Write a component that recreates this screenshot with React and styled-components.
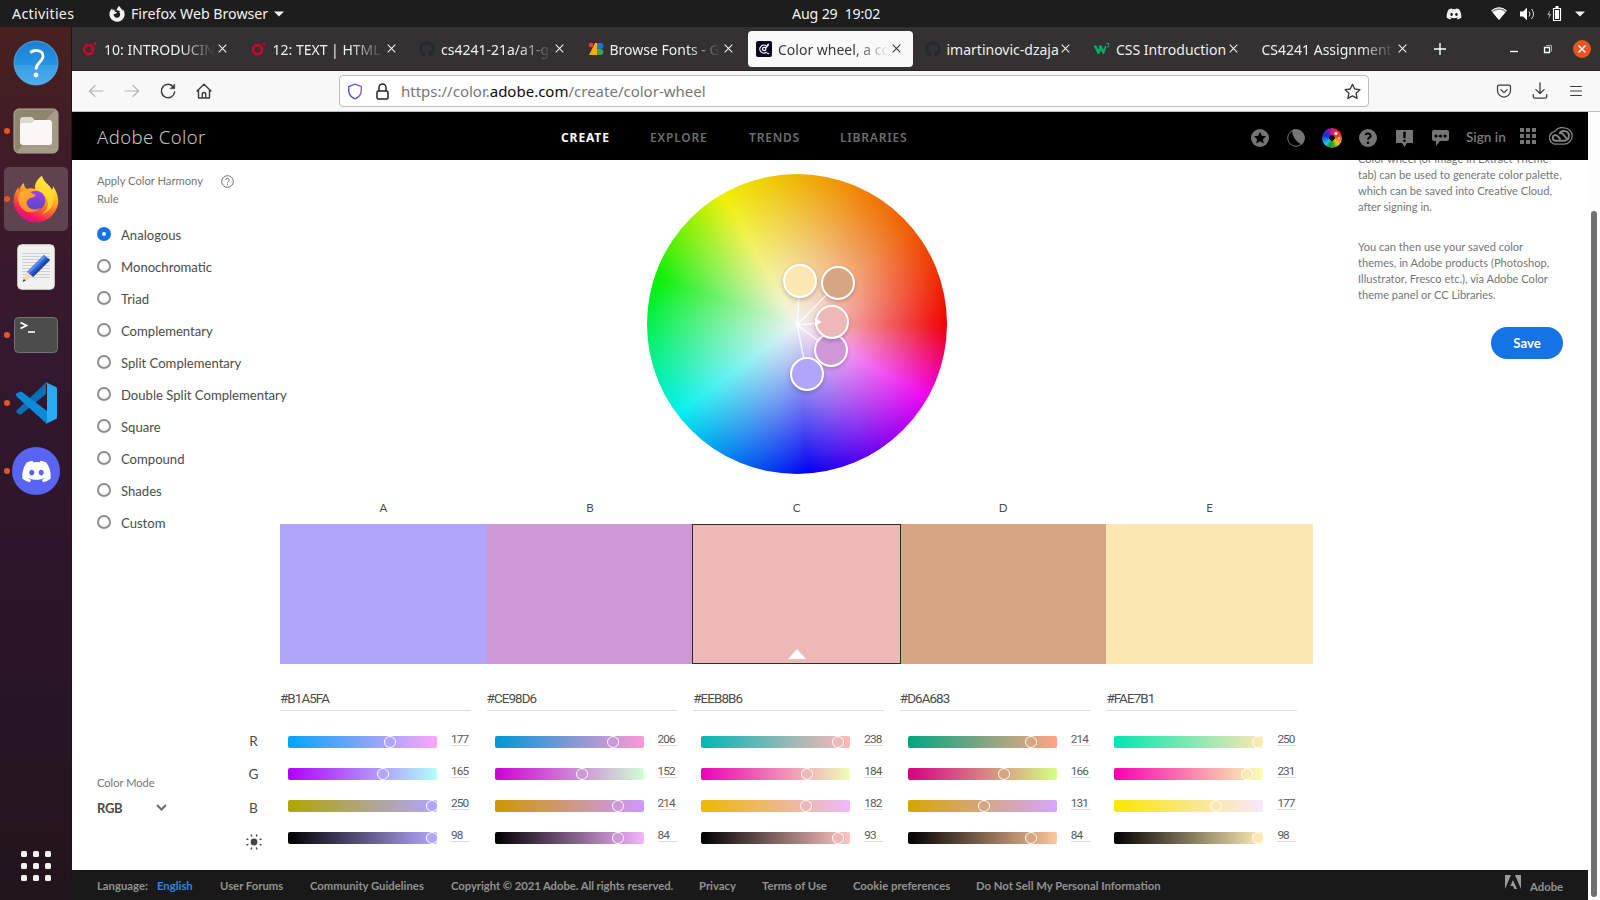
import React from 'react';
import styled, { createGlobalStyle, css } from 'styled-components';
import { FaDiscord, FaGithub, FaFirefoxBrowser } from 'react-icons/fa';

const ui = "'Noto Sans', 'Open Sans', sans-serif";
const page = "Lato, 'Noto Sans', sans-serif";
const digits = "Roboto, 'Noto Sans', sans-serif";

const GlobalStyle = createGlobalStyle`
  *, *::before, *::after { box-sizing: border-box; }
  body { margin: 0; overflow: hidden; }
  svg { display: block; flex: none; }
`;

/* ---------- desktop ---------- */
const Desktop = styled.div`
  display: flex;
  flex-direction: column;
  width: 1600px;
  height: 900px;
  overflow: hidden;
  background: #fff;
  font-family: ${ui};
`;

const TopBar = styled.header`
  display: grid;
  grid-template-columns: 780px 1fr auto;
  align-items: center;
  flex: none;
  height: 27px;
  padding: 0 15px 0 12px;
  background: #1d1d1d;
  color: #f2f2f2;
  font-size: 14.2px;
  line-height: 27px;
  white-space: pre;
`;
const TopLeft = styled.div`
  display: flex;
  align-items: center;
`;
const Activities = styled.span`
  width: 97px;
  letter-spacing: 0.32px;
`;
const AppName = styled.span`
  margin: 0 6px 0 6px;
`;
const Clock = styled.span`
  letter-spacing: -0.15px;
  line-height: 25px;
`;
const Tray = styled.div`
  display: flex;
  align-items: center;
  justify-content: flex-end;
`;
const TraySlot = styled.span`
  display: flex;
  justify-content: center;
  width: ${(p) => p.$w}px;
`;

const Workspace = styled.div`
  display: flex;
  flex: 1;
  min-height: 0;
`;

const Dock = styled.nav`
  display: flex;
  flex-direction: column;
  flex: none;
  width: 72px;
  padding-top: 2px;
  border-right: 1px solid #24101d;
  background: linear-gradient(#48211f 0%, #3d1a29 18%, #33182e 38%, #2c152a 60%, #24151f 92%, #22141c 100%);
`;
const DockItem = styled.div`
  position: relative;
  display: flex;
  align-items: center;
  justify-content: center;
  height: 64px;
  margin: 2px 3px 2px 4px;
  border-radius: 5px;
  background: ${(p) => (p.$active ? 'rgba(255,255,255,0.18)' : 'transparent')};
  ${(p) =>
    p.$running &&
    css`
      &::before {
        content: '';
        position: absolute;
        left: 0;
        top: 29px;
        width: 6px;
        height: 6px;
        border-radius: 50%;
        background: #e95420;
      }
    `}
`;
const AppsGrid = styled.div`
  display: grid;
  grid-template-columns: repeat(3, 6px);
  gap: 6px;
  justify-content: center;
  margin-top: auto;
  padding-bottom: 19px;
`;
const AppsDot = styled.i`
  height: 6px;
  border-radius: 1.5px;
  background: #f0f0ec;
`;

/* ---------- browser chrome ---------- */
const Browser = styled.div`
  display: flex;
  flex-direction: column;
  flex: 1;
  min-width: 0;
`;
const TabStrip = styled.div`
  display: flex;
  align-items: center;
  flex: none;
  height: 44px;
  padding-left: 2px;
  background: #333132;
  border-bottom: 1px solid #252324;
`;
const Tab = styled.div`
  display: flex;
  align-items: center;
  flex: none;
  width: 165px;
  height: 36px;
  margin-right: 3.5px;
  padding: 0 12px 0 8px;
  border-radius: 4px;
  background: ${(p) => (p.$active ? '#f9f9f9' : 'transparent')};
  color: ${(p) => (p.$active ? '#3a3839' : '#f0f0ee')};
`;
const TabTitle = styled.span`
  flex: 1;
  overflow: hidden;
  margin-left: ${(p) => (p.$bare ? 0 : 6)}px;
  margin-right: ${(p) => (p.$fade ? 3 : 0)}px;
  font-size: 14px;
  line-height: 34px;
  padding-top: 2px;
  white-space: nowrap;
  ${(p) => p.$fade && css`mask-image: linear-gradient(90deg, #000 calc(100% - 34px), transparent 100%);`}
`;
const NewTab = styled.div`
  display: flex;
  margin-left: 12px;
`;
const WindowControls = styled.div`
  display: flex;
  align-items: center;
  gap: 17px;
  margin-left: auto;
  padding-right: 9px;
`;

const Toolbar = styled.div`
  display: flex;
  align-items: center;
  flex: none;
  height: 41px;
  background: #f8f8f8;
  border-bottom: 1px solid #bdbdbd;
  color: #3c3b3c;
`;
const NavButtons = styled.div`
  display: flex;
  gap: 16px;
  width: 267px;
  padding-left: 14px;
`;
const UrlBar = styled.div`
  display: flex;
  align-items: center;
  width: 1030px;
  height: 32px;
  padding: 0 7px;
  border: 1px solid #bcbcbc;
  border-radius: 4px;
  background: #fff;
`;
const UrlText = styled.span`
  flex: 1;
  color: #76767a;
  font-size: 15px;
  b { color: #0c0c0d; font-weight: 400; }
`;
const ToolbarEnd = styled.div`
  display: flex;
  gap: 18px;
  margin-left: auto;
  padding-right: 15px;
`;

/* ---------- Adobe Color page ---------- */
const Viewport = styled.div`
  display: flex;
  flex: 1;
  min-height: 0;
`;
const Site = styled.div`
  display: flex;
  flex-direction: column;
  width: 1516px;
  font-family: ${page};
  color: #4b4b4b;
`;
const Scrollbar = styled.div`
  flex: 1;
  padding: 99px 3px 3px;
  background: #fdfdfd;
`;
const ScrollThumb = styled.div`
  width: 6px;
  height: 100%;
  border-radius: 3px;
  background: #717171;
`;

const SiteHeader = styled.div`
  display: flex;
  align-items: center;
  flex: none;
  height: 48px;
  padding-left: 25px;
  background: #000;
`;
const Brand = styled.span`
  width: 464px;
  padding-top: 1px;
  color: #c4c4c4;
  font-family: ${ui};
  font-size: 18.5px;
  font-weight: 300;
  letter-spacing: 0.4px;
`;
const NavLink = styled.span`
  width: ${(p) => p.$w}px;
  padding-top: 2px;
  color: ${(p) => (p.$active ? '#fff' : '#6d6d6d')};
  font-family: ${ui};
  font-size: 12px;
  font-weight: ${(p) => (p.$active ? 700 : 600)};
  letter-spacing: ${(p) => (p.$active ? 0.9 : 0.8)}px;
`;
const HeaderTools = styled.div`
  display: flex;
  align-items: center;
  margin-left: auto;
  padding-right: 15px;
`;
const Tool = styled.span`
  display: flex;
  justify-content: center;
  width: 36px;
  padding-top: 3px;
`;
const SignIn = styled.span`
  width: 62px;
  padding: 1px 0 0 8px;
  color: #7b7b7b;
  font-size: 13.6px;
  font-weight: 600;
  white-space: nowrap;
`;
const Waffle = styled.div`
  display: grid;
  grid-template-columns: repeat(3, 4px);
  gap: 2px;
  margin-right: 13px;
  i { height: 4px; background: #757575; }
`;

const Main = styled.main`
  display: grid;
  grid-template-columns: 208px 1033px 1fr;
  flex: none;
  height: 710px;
  overflow: hidden;
`;

const Side = styled.aside`
  display: flex;
  flex-direction: column;
  padding: 12px 0 0 25px;
`;
const RuleHead = styled.div`
  display: flex;
  gap: 15px;
  height: 46px;
  color: #757575;
  font-size: 11.2px;
  line-height: 18px;
  svg { margin-top: 3px; }
`;
const RuleTitle = styled.span`
  width: 109px;
`;
const Option = styled.label`
  display: flex;
  align-items: center;
  gap: 10px;
  height: 32px;
  color: #4b4b4b;
  font-size: 13.1px;
  white-space: nowrap;
`;
const OptionText = styled.span`
  padding-top: 2px;
`;
const Radio = styled.i`
  flex: none;
  width: 14px;
  height: 14px;
  border: ${(p) => (p.$on ? '5px solid #1473e6' : '2px solid #8e8e8e')};
  border-radius: 50%;
  background: #fdfdfd;
`;
const SideFoot = styled.div`
  display: flex;
  margin-top: auto;
  height: 145px;
`;
const Mode = styled.div`
  flex: none;
  width: 148px;
  padding-top: 49px;
`;
const ModeLabel = styled.div`
  height: 25px;
  color: #757575;
  font-size: 11.1px;
  line-height: 18px;
`;
const ModeValue = styled.div`
  display: flex;
  align-items: center;
  gap: 34px;
  height: 18px;
  font-size: 13px;
  font-weight: 700;
  letter-spacing: -0.3px;
  svg { margin-bottom: 2px; }
`;
const Channels = styled.div`
  display: flex;
  flex-direction: column;
  width: 17px;
  font-size: 13.6px;
  line-height: 33.4px;
  align-items: center;
`;

const Center = styled.section`
  display: flex;
  flex-direction: column;
  align-items: center;
  padding-top: 14px;
`;
const Wheel = styled.div`
  position: relative;
  flex: none;
  width: 300px;
  height: 300px;
  border-radius: 50%;
  background:
    radial-gradient(closest-side, rgb(243, 243, 243), rgba(241, 241, 241, 0)),
    conic-gradient(#f0b400 0deg, #f07800 30deg, #f05a00 50deg, #f00000 90deg, #f000f0 119deg, #0000f0 176deg, #00f0f0 233deg, #00f000 288deg, #f0f000 330deg, #f0b400 360deg);
`;
const Spokes = styled.svg`
  position: absolute;
  inset: 0;
`;
const Marker = styled.i`
  position: absolute;
  left: ${(p) => p.$x - 17}px;
  top: ${(p) => p.$y - 17}px;
  width: 34px;
  height: 34px;
  border: 2px solid #fff;
  border-radius: 50%;
  background: ${(p) => p.$c};
  box-shadow: 0 2px 4px rgba(0, 0, 0, 0.22);
`;
const MarkerArrow = styled.i`
  position: absolute;
  left: 168px;
  top: 144px;
  border: solid transparent;
  border-width: 4.5px 0 4.5px 7px;
  border-left-color: #fff;
`;

const Columns = styled.div`
  display: grid;
  grid-template-columns: repeat(5, 1fr);
  width: 1033px;
`;
const ColumnName = styled.div`
  padding-top: 25px;
  height: 50px;
  font-size: 11.5px;
  line-height: 18px;
  text-align: center;
`;
const Swatch = styled.div`
  display: flex;
  align-items: flex-end;
  justify-content: center;
  height: 140px;
  background: ${(p) => p.$c};
  ${(p) =>
    p.$selected &&
    css`
      z-index: 1;
      margin: 0 -1px;
      border: 1px solid #2c2c2c;
      &::after {
        content: '';
        margin: 0 0 4px 1px;
        border: solid transparent;
        border-width: 0 9px 10px;
        border-bottom-color: #fff;
      }
    `}
`;
const Controls = styled.div`
  padding: 24px 16px 0 0;
`;
const Hex = styled.div`
  height: 23px;
  margin-bottom: 25px;
  border-bottom: 1px solid #dcdcdc;
  font-family: ${digits};
  font-size: 13.4px;
  line-height: 22px;
  letter-spacing: -0.9px;
`;
const SliderRow = styled.div`
  display: flex;
  height: 32px;
  padding-left: 8px;
`;
const Track = styled.div`
  position: relative;
  width: 149px;
  height: 12px;
  border-radius: 2px;
`;
const Thumb = styled.i`
  position: absolute;
  top: 0;
  width: 12px;
  height: 12px;
  border: 1px solid #fff;
  border-radius: 50%;
`;
const Value = styled.span`
  width: 19px;
  height: 17px;
  margin: -7px 0 0 14px;
  border-bottom: 1px solid #d8d8d8;
  color: #5a5a5a;
  font-family: ${digits};
  font-size: 11.8px;
  line-height: 20px;
  letter-spacing: -0.9px;
`;

const Info = styled.aside`
  display: flex;
  flex-direction: column;
  padding: 0 25px 0 45px;
  margin-top: -9px;
  color: #757575;
  font-size: 11.1px;
  line-height: 16px;
  white-space: pre;
`;
const Para = styled.p`
  margin: 0 0 24px;
`;
const SaveButton = styled.button`
  align-self: flex-end;
  width: 72px;
  height: 32px;
  padding: 0 0 1px;
  border: 0;
  border-radius: 16px;
  background: #1473e6;
  color: #fff;
  font: 700 13.2px ${page};
`;

const Footer = styled.footer`
  display: flex;
  align-items: center;
  flex: none;
  height: 30px;
  padding: 0 25px 0;
  background: #191919;
  color: #929292;
  font-size: 11.3px;
  font-weight: 700;
  white-space: nowrap;
`;
const FootItem = styled.span`
  width: ${(p) => p.$w}px;
  padding-top: 1px;
  color: ${(p) => (p.$link ? '#2f86ee' : 'inherit')};
  letter-spacing: ${(p) => p.$ls || 0}px;
`;
const AdobeMark = styled.span`
  display: flex;
  gap: 9px;
  margin-left: auto;
`;
const AdobeText = styled.span`
  width: 33px;
  padding-top: 4px;
  line-height: 16px;
`;

/* ---------- icons ---------- */
const Close = () => (
  <svg width="9" height="9" viewBox="0 0 9 9" stroke="currentColor" strokeWidth="1.1"><path d="M.7.7l7.6 7.6M8.3.7L.7 8.3" /></svg>
);
const Caret = () => <svg width="10" height="6" fill="#f2f2f2"><path d="M0 .5h10L5 5.5z" /></svg>;
const RedO = () => (
  <svg width="16" height="16" viewBox="0 0 16 16"><circle cx="6.6" cy="8.6" r="4.5" fill="none" stroke="#d3002d" strokeWidth="2.6" /><circle cx="13.1" cy="3" r="1.4" fill="#d3002d" /></svg>
);
const GFonts = () => (
  <svg width="16" height="16" viewBox="0 0 16 16"><path d="M7 2h3v12H1z" fill="#fbad05" /><circle cx="3" cy="4" r="2.2" fill="#ea4335" /><path d="M9 2h3.4a3 3 0 010 6H9z" fill="#1a73e8" /><path d="M9 8h3.4a3 3 0 010 6H9z" fill="#34a853" /></svg>
);
const ColorFav = () => (
  <svg width="16" height="16" viewBox="0 0 16 16"><rect width="16" height="16" rx="2" fill="#0b0620" /><g fill="none" stroke="#fff" strokeWidth="1.2"><path d="M10.6 5.200A4 4 0 1010.600 11M11 4l2-1M11 12l2 1" /><circle cx="8.200" cy="8" r="1.700" /><path d="M9.500 7l3-3" /></g></svg>
);
const W3 = () => (
  <svg width="17" height="16" viewBox="0 0 17 16"><path d="M.5 4.500h3l1.800 4 1-2.200-.8-1.800h3l2 4 1.700-4 1.300 1-2.400 7.500H9.800L8 9.500l-1.800 3.500H4.600z" fill="#0aa86a" /><path d="M13.500 2.500h2.600l-1.200 1.500c1.800.3 1.300 2.500-.9 2.200" fill="none" stroke="#0aa86a" strokeWidth="1" /></svg>
);
const Stroke = ({ w = 20, sw = 1.4, children, c = 'currentColor' }) => (
  <svg width={w} height={w} viewBox="0 0 20 20" fill="none" stroke={c} strokeWidth={sw} strokeLinecap="round" strokeLinejoin="round">{children}</svg>
);

const HelpApp = () => (
  <svg width="46" height="46" viewBox="0 0 46 46">
    <defs><linearGradient id="hg" x2="0" y2="1"><stop offset="0" stopColor="#1c7fd3" /><stop offset=".54" stopColor="#2792e2" /><stop offset=".55" stopColor="#369ce5" /><stop offset="1" stopColor="#4fb1ec" /></linearGradient></defs>
    <circle cx="23" cy="23" r="22" fill="url(#hg)" stroke="#59b4ee" strokeWidth=".8" />
    <path d="M17.500 12.800c2.500-3.300 12.500-3.600 12.500 3.400 0 5.500-7 6.300-7 13.300" fill="none" stroke="#fff" strokeWidth="2.800" /><circle cx="23" cy="35" r="2.400" fill="#fff" />
  </svg>
);
const FilesApp = () => (
  <svg width="46" height="46" viewBox="0 0 46 46">
    <rect x="1" y="1" width="44" height="44" rx="5" fill="#8f8670" stroke="#b5ae9c" /><path d="M44.500 6v34a5 5 0 01-5 4.500H3L42 2q2.500 1 2.500 4z" fill="#a49c86" />
    <path d="M7 12a3 3 0 013-3h9l3.500 4H36v8H7z" fill="#ddd9cd" /><path d="M7 17q0-2 2-2h10l3-3h14a3 3 0 013 3v19a3 3 0 01-3 3H10a3 3 0 01-3-3z" fill="#f9f8f7" />
  </svg>
);
const FirefoxApp = () => (
  <svg width="46" height="48" viewBox="0 0 46 48">
    <defs>
      <linearGradient id="ff1" x1=".8" x2=".3" y2="1"><stop offset=".1" stopColor="#fff04a" /><stop offset=".4" stopColor="#ffae22" /><stop offset=".66" stopColor="#ff5a33" /><stop offset=".85" stopColor="#f3195f" /><stop offset="1" stopColor="#d4108a" /></linearGradient>
      <linearGradient id="ff2" x2="0" y2="1"><stop offset="0" stopColor="#a43cf2" /><stop offset="1" stopColor="#4f4bbf" /></linearGradient>
      <linearGradient id="ff3" x2="1" y2="1"><stop offset="0" stopColor="#ffb82e" /><stop offset="1" stopColor="#ff7a2c" /></linearGradient>
    </defs>
    <path d="M29 1c1 6 8 9 10 14 1-1 1-3 1-4 4 6 6 12 5 18a22.500 22.500 0 01-44.500-2C.5 20 3 15 5.500 12l.5 4c1-4 3-7 5-8 0 3 1 5 3 6 2-1 5-1 8 0-1-5 3-11 7-13z" fill="url(#ff1)" />
    <path d="M29 1c1 6 8 9 10 14 5 11-1 22-10 24 6-4 8-11 3-18-3-4-6-4-9-7-1-5 2-11 6-13z" fill="#ffe030" opacity=".75" />
    <circle cx="22.500" cy="25.500" r="9.800" fill="url(#ff2)" />
    <path d="M7 18c3-3 7-3 10-1 2 1 4 3 6 2.500-1 2.500-3 3-5.500 3.500-2 .6-3.500 2.500-4 5 1 6 8 8 14 5-5 6-16 6-20-2-3-5-2.500-10-.5-13z" fill="url(#ff3)" />
  </svg>
);
const TextApp = () => (
  <svg width="38" height="46" viewBox="0 0 38 46">
    <rect x=".7" y=".7" width="36.600" height="44.600" rx="4" fill="#f1f1f1" stroke="#d9d9d9" />
    <path d="M5 9.500h28M5 12.500h28M5 15.500h28M5 18.500h28M5 21.500h28M5 24.500h28M5 27.500h28M5 30.500h28M5 33.500h28" stroke="#cfcfcf" strokeWidth="1" />
    <path d="M27 11l6 5-17 17-6-5z" fill="#2a62d6" /><path d="M27 11l2 1.700-17 17-2-1.700z" fill="#5a8cf0" /><path d="M31 14.300l2 1.700-17 17-2-1.700z" fill="#1b45a8" /><path d="M10 28l6 5-10.500 5z" fill="#fbd9b8" /><path d="M6.800 35l2 1.600-3.300 1.400z" fill="#333" />
  </svg>
);
const TerminalApp = () => (
  <svg width="44" height="36" viewBox="0 0 44 36">
    <rect x=".5" y=".5" width="43" height="35" rx="4" fill="#4c4c4c" stroke="#747474" /><path d="M6.500 5.500l6 3-6 3" fill="none" stroke="#fff" strokeWidth="1.700" /><path d="M14 15h7" stroke="#fff" strokeWidth="1.600" />
  </svg>
);
const CodeApp = () => (
  <svg width="42" height="42" viewBox="0 0 42 42">
    <path d="M1.500 28.500L31 .5v11.500L6 32.500q-1.500.5-4.500-2z" fill="#0a6fb3" />
    <path d="M1.500 13.500q-1.700-1 0-2L5 9.700q1-.4 2 .3L32 29v13L1.500 14.500z" fill="#0a8ad8" />
    <path d="M31 .3L41 5q1 .5 1 1.500v29q0 1-1 1.500l-10 4.800q1-1 1-2V2.500z" fill="#2aaaf2" />
  </svg>
);
const DiscordRound = styled.div`
  display: grid;
  place-items: center;
  width: 48px;
  height: 48px;
  border-radius: 50%;
  background: #5865f2;
  color: #fff;
  flex: none;
`;
const MiniWheel = styled.i`
  width: 20px;
  height: 20px;
  border-radius: 50%;
  background:
    radial-gradient(circle at 14px 5.5px, #fff 1.2px, transparent 1.9px),
    radial-gradient(circle at 17px 10px, #fff8 0.8px, transparent 1.5px),
    radial-gradient(circle at 10px 10px, #111 2.5px, transparent 3px),
    conic-gradient(#d21c8c, #f0282a 30deg, #f03a28 75deg, #f5a01c 110deg, #d9c718 140deg, #2ba82a 170deg, #1c9a38 200deg, #22c8e6 225deg, #1a84f0 255deg, #1a2ad0 290deg, #6a1cc8 330deg, #d21c8c);
`;

/* ---------- data ---------- */
const tabs = [
  { icon: <RedO />, title: '10: INTRODUCING', fade: true },
  { icon: <RedO />, title: '12: TEXT | HTML &', fade: true },
  { icon: <FaGithub size={16} color="#24292e" />, title: 'cs4241-21a/a1-ge', fade: true },
  { icon: <GFonts />, title: 'Browse Fonts - G', fade: true },
  { icon: <ColorFav />, title: 'Color wheel, a co', fade: true, active: true },
  { icon: <FaGithub size={16} color="#24292e" />, title: 'imartinovic-dzaja' },
  { icon: <W3 />, title: 'CSS Introduction' },
  { title: 'CS4241 Assignment', fade: true },
];
const rules = ['Analogous', 'Monochromatic', 'Triad', 'Complementary', 'Split Complementary', 'Double Split Complementary', 'Square', 'Compound', 'Shades', 'Custom'];
const palette = [
  { name: 'A', hex: '#B1A5FA', rgb: [177, 165, 250], v: 98 },
  { name: 'B', hex: '#CE98D6', rgb: [206, 152, 214], v: 84 },
  { name: 'C', hex: '#EEB8B6', rgb: [238, 184, 182], v: 93, selected: true },
  { name: 'D', hex: '#D6A683', rgb: [214, 166, 131], v: 84 },
  { name: 'E', hex: '#FAE7B1', rgb: [250, 231, 177], v: 98 },
];
const markers = [
  { x: 153, y: 107, c: '#FAE7B1' },
  { x: 191, y: 109, c: '#D6A683' },
  { x: 184, y: 176, c: '#CE98D6' },
  { x: 185, y: 148, c: '#EEB8B6' },
  { x: 160, y: 200, c: '#B1A5FA' },
];

const rgbText = (c) => `rgb(${c.join(',')})`;
function channelSlider(color, i) {
  if (i === 3) {
    const top = Math.max(...color.rgb);
    return { from: 'rgb(0,0,0)', to: rgbText(color.rgb.map((n) => Math.round((n * 255) / top))), at: color.v / 100, value: color.v };
  }
  const mix = (n) => rgbText(color.rgb.map((c, k) => (k === i ? n : c)));
  return { from: mix(0), to: mix(255), at: color.rgb[i] / 255, value: color.rgb[i] };
}

const Slider = ({ from, to, at, value, color }) => (
  <SliderRow>
    <Track style={{ background: `linear-gradient(90deg, ${from}, ${to})` }}>
      <Thumb style={{ left: at * 145.6 - 5, background: color }} />
    </Track>
    <Value>{value}</Value>
  </SliderRow>
);

export default function App() {
  return (
    <Desktop>
      <GlobalStyle />
      <TopBar>
        <TopLeft>
          <Activities>Activities</Activities>
          <FaFirefoxBrowser size={16} />
          <AppName>Firefox Web Browser</AppName>
          <Caret />
        </TopLeft>
        <Clock>{'Aug 29  19:02'}</Clock>
        <Tray>
          <TraySlot $w={46}><FaDiscord size={16} /></TraySlot>
          <TraySlot $w={44}>
            <svg width="16" height="14" viewBox="0 0 16 14"><path d="M0 3.500Q8-3 16 3.500L8 13z" fill="#8c8c8c" /><path d="M1.500 5.200Q8 .8 14.500 5.200L8 13z" fill="#fff" /><path d="M.5 3.700Q8-2 15.500 3.700" fill="none" stroke="#fff" /></svg>
          </TraySlot>
          <TraySlot $w={13}>
            <svg width="15" height="14" viewBox="0 0 15 14"><path d="M0 4.500h3L7 .8v12.400L3 9.500H0z" fill="#fff" /><path d="M9 4.500q2 2.500 0 5M11.500 2q4 5 0 10" fill="none" stroke="#ddd" /></svg>
          </TraySlot>
          <TraySlot $w={41}>
            <svg width="15" height="16" viewBox="0 0 15 16"><path d="M3 4L0 9h2l-.5 4L4.500 8h-2z" fill="#999" /><path d="M6.500 2.500h7v12h-7z" fill="none" stroke="#fff" strokeWidth="1.200" /><path d="M8 4h4v9H8zM8.500 0h3v2h-3z" fill="#fff" /></svg>
          </TraySlot>
          <Caret />
        </Tray>
      </TopBar>

      <Workspace>
        <Dock>
          <DockItem><HelpApp /></DockItem>
          <DockItem $running><FilesApp /></DockItem>
          <DockItem $running $active><FirefoxApp /></DockItem>
          <DockItem><TextApp /></DockItem>
          <DockItem $running><TerminalApp /></DockItem>
          <DockItem $running><CodeApp /></DockItem>
          <DockItem $running><DiscordRound><FaDiscord size={31} /></DiscordRound></DockItem>
          <AppsGrid>{Array.from({ length: 9 }, (_, i) => <AppsDot key={i} />)}</AppsGrid>
        </Dock>

        <Browser>
          <TabStrip>
            {tabs.map((t) => (
              <Tab key={t.title} $active={t.active}>
                {t.icon}
                <TabTitle $fade={t.fade} $bare={!t.icon}>{t.title}</TabTitle>
                <Close />
              </Tab>
            ))}
            <NewTab>
              <svg width="12" height="12" stroke="#fff" strokeWidth="1.400"><path d="M6 0v12M0 6h12" /></svg>
            </NewTab>
            <WindowControls>
              <svg width="18" height="12" stroke="#fff" strokeWidth="1.300"><path d="M5 8.500h8" /></svg>
              <svg width="16" height="12" fill="none" stroke="#fff"><path d="M4.500 4.500h5v5h-5z" strokeWidth="1.300" /><path d="M6 2.500h5.500v6" stroke="#aaa" /></svg>
              <svg width="18" height="18" viewBox="0 0 18 18"><circle cx="9" cy="9" r="9" fill="#e95420" /><path d="M5.500 5.500l7 7M12.500 5.500l-7 7" stroke="#fff" strokeWidth="1.500" /></svg>
            </WindowControls>
          </TabStrip>

          <Toolbar>
            <NavButtons>
              <Stroke c="#b3b3b3" sw={1.2}><path d="M17 10H3.500M9 4.500L3.500 10 9 15.500" /></Stroke>
              <Stroke c="#b3b3b3" sw={1.2}><path d="M3 10h13.500M11 4.500l5.500 5.500-5.500 5.500" /></Stroke>
              <Stroke sw={1.5}><path d="M15.500 6A6.700 6.700 0 1016.700 11" /><path d="M16.700 3.300v4.400h-4.400z" fill="currentColor" strokeWidth=".6" /></Stroke>
              <Stroke sw={1.4}><path d="M3 10l7-6.700 7 6.700M4.500 9v8h11V9M8.300 17v-4.500q1.700-2 3.400 0V17" /></Stroke>
            </NavButtons>
            <UrlBar>
              <svg width="16" height="17" viewBox="0 0 16 17"><defs><linearGradient id="sh" x1="1" x2="0" y2="1"><stop offset="0" stopColor="#a35bf5" /><stop offset="1" stopColor="#1d55c8" /></linearGradient></defs><path d="M8 1.200l6.300 2.300v3.800c0 4-2.500 7-6.300 8.500-3.800-1.500-6.300-4.500-6.300-8.500V3.500z" fill="none" stroke="url(#sh)" strokeWidth="1.400" /></svg>
              <TraySlot $w={38}>
                <svg width="13" height="17" viewBox="0 0 13 17" fill="none" stroke="#222" strokeWidth="1.500"><rect x="1" y="8" width="11" height="8" rx="1.500" /><path d="M3 8V4.500a3.500 3.500 0 017 0V8" /></svg>
              </TraySlot>
              <UrlText><span>https://color.</span><b>adobe.com</b><span>/create/color-wheel</span></UrlText>
              <Stroke w={17} sw={1.6} c="#3a3a3a"><path d="M10 1.500l2.600 5.600 6.100.7-4.500 4.200 1.200 6.100-5.400-3-5.400 3 1.200-6.100L1.300 7.800l6.100-.7z" /></Stroke>
            </UrlBar>
            <ToolbarEnd>
              <Stroke w={18} sw={1.4}><path d="M4.300 3.500h11.400q1.500 0 1.500 1.500v4.500a7.200 7.200 0 01-14.400 0V5q0-1.500 1.500-1.500zM6.500 8.500l3.500 3.300 3.500-3.300" /></Stroke>
              <Stroke w={18} sw={1.4}><path d="M10 1v11.500M5.500 8.500l4.500 4.300 4.500-4.300M2.500 14v2q0 2 2 2h11q2 0 2-2v-2" /></Stroke>
              <Stroke w={18} sw={1.3}><path d="M4 5h12M4 10h12M4 15h12" /></Stroke>
            </ToolbarEnd>
          </Toolbar>

          <Viewport>
            <Site>
              <SiteHeader>
                <Brand>Adobe Color</Brand>
                <NavLink $w={89} $active>CREATE</NavLink>
                <NavLink $w={99}>EXPLORE</NavLink>
                <NavLink $w={91}>TRENDS</NavLink>
                <NavLink $w={80}>LIBRARIES</NavLink>
                <HeaderTools>
                  <Tool><svg width="18" height="18" viewBox="0 0 18 18"><circle cx="9" cy="9" r="9" fill="#757575" /><path d="M9 2.800l1.800 4 4.300.5-3.200 2.900.9 4.300L9 12.300l-3.800 2.200.9-4.300-3.200-2.900 4.300-.5z" fill="#000" /></svg></Tool>
                  <Tool><svg width="18" height="18" viewBox="0 0 18 18"><circle cx="9" cy="9" r="8.300" fill="none" stroke="#757575" strokeWidth="1" /><path d="M5 1Q5.500 11 14.800 15.800A9 9 0 005 1z" fill="#757575" /></svg></Tool>
                  <Tool><MiniWheel /></Tool>
                  <Tool><svg width="18" height="18" viewBox="0 0 18 18"><circle cx="9" cy="9" r="9" fill="#757575" /><path d="M6.200 5.800q2.800-2.300 5-.3 1.200 2-1.200 3.300-.9.600-.9 2" fill="none" stroke="#000" strokeWidth="2" /><circle cx="9" cy="13.800" r="1.300" fill="#000" /></svg></Tool>
                  <Tool><svg width="17" height="18" viewBox="0 0 17 18"><path d="M0 1h17v13h-6l-2.500 4L6 14H0z" fill="#757575" /><path d="M7.500 3h2l-.3 6H7.800z" fill="#000" stroke="#000" strokeWidth=".6" /><circle cx="8.500" cy="11.800" r="1.300" fill="#000" /></svg></Tool>
                  <Tool><svg width="17" height="18" viewBox="0 0 17 18"><path d="M2 1h13q2 0 2 2v7q0 2-2 2H8l-4 5v-5H2q-2 0-2-2V3q0-2 2-2z" fill="#757575" /><g fill="#000"><circle cx="4" cy="7" r="1.600" /><circle cx="8.500" cy="7" r="1.600" /><circle cx="13" cy="7" r="1.600" /></g></svg></Tool>
                  <SignIn>Sign in</SignIn>
                  <Waffle>{Array.from({ length: 9 }, (_, i) => <i key={i} />)}</Waffle>
                  <svg width="24" height="18" viewBox="0 0 24 18" fill="none" stroke="#858585">
                    <path d="M15 .8a8.200 8.200 0 010 16.400H7A6.500 6.500 0 015.800 4.300 9 9 0 0115 .8z" strokeWidth="1.300" />
                    <path d="M11.500 12.300l-3-3.300C7 7.400 3.700 8 3.700 10.800c0 2 1.500 3 3.200 3H15a4.900 4.900 0 10-4.600-6.600" strokeWidth="1.900" />
                    <path d="M10.500 5.500q1.500-.3 2.800 1.200l4.500 5" strokeWidth="1.900" />
                  </svg>
                </HeaderTools>
              </SiteHeader>

              <Main>
                <Side>
                  <RuleHead>
                    <RuleTitle>Apply Color Harmony Rule</RuleTitle>
                    <svg width="13" height="13" viewBox="0 0 13 13" fill="none" stroke="#6e6e6e"><circle cx="6.500" cy="6.500" r="5.800" /><path d="M4.800 5q.2-1.600 1.800-1.600T8.200 5q0 .8-.9 1.300-.8.500-.8 1.300M6.500 8.700v1.200" /></svg>
                  </RuleHead>
                  <div>
                    {rules.map((r, i) => (
                      <Option key={r}><Radio $on={i === 0} /><OptionText>{r}</OptionText></Option>
                    ))}
                  </div>
                  <SideFoot>
                    <Mode>
                      <ModeLabel>Color Mode</ModeLabel>
                      <ModeValue>
                        RGB
                        <svg width="11" height="7" viewBox="0 0 11 7" fill="none" stroke="#6e6e6e" strokeWidth="2"><path d="M1 1l4.500 4.500L10 1" /></svg>
                      </ModeValue>
                    </Mode>
                    <Channels>
                      <span>R</span><span>G</span><span>B</span>
                      <svg width="16" height="33" viewBox="0 -9 16 33"><circle cx="8" cy="8" r="3.400" fill="#444" /><path d="M5.700 2.400L5 .5M10.300 2.400L11 .5M2.400 5.700L.5 5M2.400 10.300l-1.900.7M13.600 5.700l1.900-.7M13.600 10.300l1.900.7M5.700 13.600L5 15.500M10.300 13.600l.7 1.900" stroke="#444" strokeWidth="1.400" /></svg>
                    </Channels>
                  </SideFoot>
                </Side>

                <Center>
                  <Wheel>
                    <Spokes width="300" height="300" stroke="#fff" strokeWidth="1.300" opacity=".85">
                      {markers.map((m) => <path key={m.c} d={`M150 151L${m.x} ${m.y}`} />)}
                    </Spokes>
                    {markers.map((m) => <Marker key={m.c} $x={m.x} $y={m.y} $c={m.c} />)}
                    <MarkerArrow />
                  </Wheel>
                  <Columns>
                    {palette.map((c) => <ColumnName key={c.name}>{c.name}</ColumnName>)}
                    {palette.map((c) => <Swatch key={c.name} $c={c.hex} $selected={c.selected} />)}
                    {palette.map((c) => (
                      <Controls key={c.name}>
                        <Hex>{c.hex}</Hex>
                        {[0, 1, 2, 3].map((i) => <Slider key={i} color={c.hex} {...channelSlider(c, i)} />)}
                      </Controls>
                    ))}
                  </Columns>
                </Center>

                <Info>
                  <Para>{'Color wheel (or image in Extract Theme\ntab) can be used to generate color palette,\nwhich can be saved into Creative Cloud,\nafter signing in.'}</Para>
                  <Para>{'You can then use your saved color\nthemes, in Adobe products (Photoshop,\nIllustrator, Fresco etc.), via Adobe Color\ntheme panel or CC Libraries.'}</Para>
                  <SaveButton>Save</SaveButton>
                </Info>
              </Main>

              <Footer>
                <FootItem $w={60}>Language:</FootItem>
                <FootItem $w={63} $link>English</FootItem>
                <FootItem $w={90}>User Forums</FootItem>
                <FootItem $w={141}>Community Guidelines</FootItem>
                <FootItem $w={248} $ls={-0.06}>Copyright © 2021 Adobe. All rights reserved.</FootItem>
                <FootItem $w={63}>Privacy</FootItem>
                <FootItem $w={91}>Terms of Use</FootItem>
                <FootItem $w={123}>Cookie preferences</FootItem>
                <FootItem $w={190}>Do Not Sell My Personal Information</FootItem>
                <AdobeMark>
                  <svg width="16" height="14" viewBox="0 0 16 14" fill="#9b9b9b"><path d="M0 0h6L0 14zM10 0h6v14zM8 5l4 9H9.300l-1.200-3H5.300z" /></svg>
                  <AdobeText>Adobe</AdobeText>
                </AdobeMark>
              </Footer>
            </Site>
            <Scrollbar><ScrollThumb /></Scrollbar>
          </Viewport>
        </Browser>
      </Workspace>
    </Desktop>
  );
}
